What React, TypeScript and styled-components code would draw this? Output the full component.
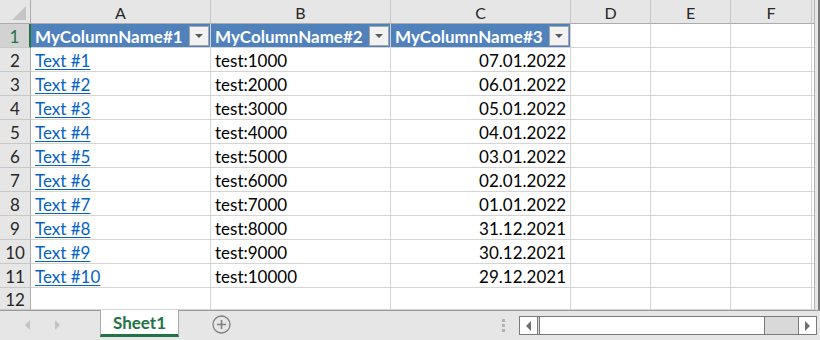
import React from "react";
import styled, { createGlobalStyle, css } from "styled-components";

const Global = createGlobalStyle`
  html, body { margin: 0; padding: 0; background: #ffffff; overflow: hidden; }
  * { box-sizing: border-box; }
`;

const FONT = `"Lato", "Liberation Sans", sans-serif`;

const Frame = styled.div`
  width: 820px;
  height: 340px;
  display: flex;
  flex-direction: column;
  font-family: ${FONT};
  background: #e6e6e6;
`;

const Main = styled.div`
  height: 311px;
  display: flex;
  border-bottom: 1px solid #9b9b9b;
`;

const Sheet = styled.div`
  flex: 1;
  display: grid;
  grid-template-columns: 31px 180px 180px 180px 80px 80px 81px 1fr;
  grid-template-rows: 24px repeat(11, 24px) 22px;
  background: #ffffff;
  border-right: 1px solid #b4b4b4;
  overflow: hidden;
`;

const VScroll = styled.div`
  width: 5px;
  background: #e6e6e6;
  border-right: 2px solid #7a7a7a;
`;

const Corner = styled.div`
  position: relative;
  background: #e6e6e6;
  border-right: 1px solid #ababab;
  border-bottom: 1px solid #ababab;
  &::after {
    content: "";
    position: absolute;
    right: 4px;
    bottom: 3px;
    width: 0;
    height: 0;
    border-left: 14px solid transparent;
    border-bottom: 14px solid #c5c5c5;
  }
`;

const ColHeader = styled.div`
  background: #e6e6e6;
  border-right: 1px solid #c8c8c8;
  border-bottom: 1px solid #ababab;
  display: flex;
  align-items: center;
  justify-content: center;
  font-size: 16px;
  color: #262626;
  padding-top: 1px;
`;

const RowHeader = styled.div<{ $selected?: boolean }>`
  background: ${(p) => (p.$selected ? "#d2d2d2" : "#e6e6e6")};
  border-right: ${(p) => (p.$selected ? "2px solid #217346" : "1px solid #ababab")};
  border-bottom: 1px solid #c8c8c8;
  display: flex;
  align-items: center;
  justify-content: center;
  font-size: 17px;
  color: ${(p) => (p.$selected ? "#217346" : "#262626")};
  padding-top: 1px;
`;

const Cell = styled.div<{ $align?: "left" | "right"; $head?: boolean }>`
  border-right: 1px solid #d4d4d4;
  border-bottom: 1px solid #d4d4d4;
  display: flex;
  align-items: center;
  justify-content: ${(p) => (p.$align === "right" ? "flex-end" : "flex-start")};
  padding: 1px 4px 0 4px;
  font-size: 17px;
  color: #000000;
  white-space: nowrap;
  overflow: hidden;
  ${(p) =>
    p.$head &&
    css`
      background: #4f81bd;
      color: #ffffff;
      font-weight: 700;
      justify-content: space-between;
      padding-right: 1px;
    `}
`;

const Link = styled.span`
  color: #0563c1;
  text-decoration: underline;
  text-underline-offset: 2px;
`;

const FilterButton = styled.span`
  width: 20px;
  height: 20px;
  background: #f2f2f2;
  border: 1px solid #a6a6a6;
  display: flex;
  align-items: center;
  justify-content: center;
  margin-top: -1px;
  &::before {
    content: "";
    width: 0;
    height: 0;
    border-left: 4px solid transparent;
    border-right: 4px solid transparent;
    border-top: 4px solid #595959;
    margin-top: 1px;
  }
`;

const TabBar = styled.div`
  flex: 1;
  display: flex;
  align-items: flex-start;
  background: #e6e6e6;
`;

const NavGroup = styled.div`
  width: 100px;
  height: 28px;
  display: flex;
  align-items: center;
  padding-left: 25px;
  gap: 25px;
`;

const NavArrow = styled.span<{ $dir: "left" | "right" }>`
  width: 0;
  height: 0;
  border-top: 5px solid transparent;
  border-bottom: 5px solid transparent;
  ${(p) =>
    p.$dir === "left"
      ? css`border-right: 5px solid #c3c3c3;`
      : css`border-left: 5px solid #c3c3c3;`}
`;

const Tab = styled.div`
  width: 79px;
  height: 27px;
  background: #ffffff;
  border-left: 1px solid #ababab;
  border-right: 1px solid #ababab;
  border-bottom: 3px solid #217346;
  margin-top: -1px;
  display: flex;
  align-items: center;
  justify-content: center;
  color: #217346;
  font-weight: 700;
  font-size: 17px;
  padding-top: 1px;
`;

const AddButton = styled.div`
  margin-left: 33px;
  margin-top: 4px;
  width: 19px;
  height: 19px;
  display: flex;
`;

const Spacer = styled.div`
  flex: 1;
`;

const Splitter = styled.div`
  margin-top: 8px;
  margin-right: 14px;
  display: flex;
  flex-direction: column;
  gap: 2px;
  & > span {
    width: 3px;
    height: 3px;
    background: #b1b1b1;
  }
`;

const HScroll = styled.div`
  margin-top: 5px;
  margin-right: 3px;
  width: 298px;
  height: 19px;
  display: flex;
  border: 1px solid #7a7a7a;
  background: #d9d9d9;
`;

const ScrollButton = styled.div<{ $dir: "left" | "right" }>`
  width: 18px;
  height: 100%;
  background: #ffffff;
  display: flex;
  align-items: center;
  justify-content: center;
  ${(p) =>
    p.$dir === "left"
      ? css`border-right: 1px solid #7a7a7a;`
      : css`border-left: 1px solid #7a7a7a;`}
  &::before {
    content: "";
    width: 0;
    height: 0;
    border-top: 5px solid transparent;
    border-bottom: 5px solid transparent;
    ${(p) =>
      p.$dir === "left"
        ? css`border-right: 5px solid #6e6e6e;`
        : css`border-left: 5px solid #6e6e6e;`}
  }
`;

const Thumb = styled.div`
  width: 226px;
  height: 100%;
  background: #ffffff;
  border-left: 1px solid #7a7a7a;
  border-right: 1px solid #7a7a7a;
  margin-left: 1px;
`;

const Track = styled.div`
  flex: 1;
`;

const columns = ["A", "B", "C", "D", "E", "F", ""];
const headers = ["MyColumnName#1", "MyColumnName#2", "MyColumnName#3"];
const dates = [
  "07.01.2022",
  "06.01.2022",
  "05.01.2022",
  "04.01.2022",
  "03.01.2022",
  "02.01.2022",
  "01.01.2022",
  "31.12.2021",
  "30.12.2021",
  "29.12.2021",
];
const data = dates.map((d, i) => ({
  link: `Text #${i + 1}`,
  test: `test:${(i + 1) * 1000}`,
  date: d,
}));

export default function App() {
  return (
    <>
      <Global />
      <Frame>
        <Main>
          <Sheet>
            <Corner />
            {columns.map((c, i) => (
              <ColHeader key={`h${i}`}>{c}</ColHeader>
            ))}
            <RowHeader $selected>1</RowHeader>
            {headers.map((h) => (
              <Cell key={h} $head>
                {h}
                <FilterButton />
              </Cell>
            ))}
            <Cell />
            <Cell />
            <Cell />
            <Cell />
            {data.map((r, i) => (
              <React.Fragment key={r.link}>
                <RowHeader>{i + 2}</RowHeader>
                <Cell>
                  <Link>{r.link}</Link>
                </Cell>
                <Cell>{r.test}</Cell>
                <Cell $align="right">{r.date}</Cell>
                <Cell />
                <Cell />
                <Cell />
                <Cell />
              </React.Fragment>
            ))}
            <RowHeader>12</RowHeader>
            <Cell />
            <Cell />
            <Cell />
            <Cell />
            <Cell />
            <Cell />
            <Cell />
          </Sheet>
          <VScroll />
        </Main>
        <TabBar>
          <NavGroup>
            <NavArrow $dir="left" />
            <NavArrow $dir="right" />
          </NavGroup>
          <Tab>Sheet1</Tab>
          <AddButton>
            <svg width="19" height="19" viewBox="0 0 19 19">
              <circle cx="9.5" cy="9.5" r="8.5" fill="none" stroke="#7f7f7f" strokeWidth="1.3" />
              <path d="M9.5 5 V14 M5 9.5 H14" stroke="#7f7f7f" strokeWidth="1.6" />
            </svg>
          </AddButton>
          <Spacer />
          <Splitter>
            <span />
            <span />
            <span />
          </Splitter>
          <HScroll>
            <ScrollButton $dir="left" />
            <Thumb />
            <Track />
            <ScrollButton $dir="right" />
          </HScroll>
        </TabBar>
      </Frame>
    </>
  );
}
